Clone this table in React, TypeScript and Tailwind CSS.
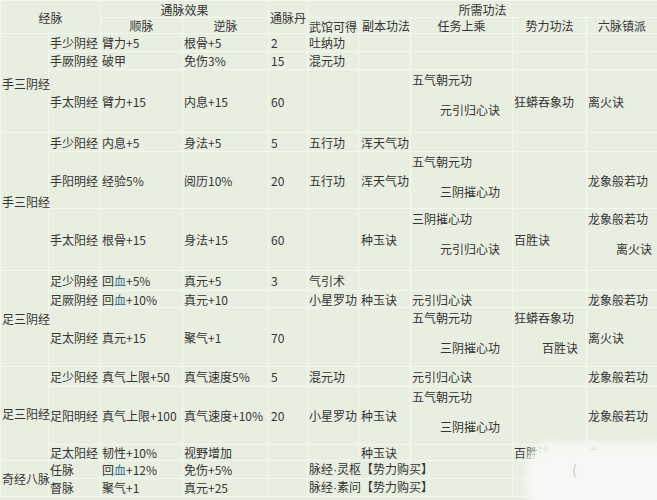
import React from "react";

type Val = string | [string, string] | undefined;

type Row = {
  g?: [string, number];
  n: string;
  s: string;
  v: string;
  d?: string;
  wg?: string;
  fb?: string;
  rw?: Val;
  sl?: Val;
  lm?: Val;
  wide?: [string, string];
  h: string;
};

const rows: Row[] = [
  { g: ["手三阴经", 3], n: "手少阴经", s: "臂力+5", v: "根骨+5", d: "2", wg: "吐纳功", h: "h-[18px]" },
  { n: "手厥阴经", s: "破甲", v: "免伤3%", d: "15", wg: "混元功", h: "h-[18px]" },
  { n: "手太阴经", s: "臂力+15", v: "内息+15", d: "60", rw: ["五气朝元功", "元引归心诀"], sl: "狂蟒吞象功", lm: "离火诀", h: "h-[63px]" },
  { g: ["手三阳经", 3], n: "手少阳经", s: "内息+5", v: "身法+5", d: "5", wg: "五行功", fb: "浑天气功", h: "h-[19px]" },
  { n: "手阳明经", s: "经验5%", v: "阅历10%", d: "20", wg: "五行功", fb: "浑天气功", rw: ["五气朝元功", "三阴摧心功"], lm: "龙象般若功", h: "h-[57px]" },
  { n: "手太阳经", s: "根骨+15", v: "身法+15", d: "60", fb: "种玉诀", rw: ["三阴摧心功", "元引归心诀"], sl: "百胜诀", lm: ["龙象般若功", "离火诀"], h: "h-[62px]" },
  { g: ["足三阴经", 3], n: "足少阴经", s: "回血+5%", v: "真元+5", d: "3", wg: "气引术", h: "h-[20px]" },
  { n: "足厥阴经", s: "回血+10%", v: "真元+10", wg: "小星罗功", fb: "种玉诀", rw: "元引归心诀", lm: "龙象般若功", h: "h-[17px]" },
  { n: "足太阴经", s: "真元+15", v: "聚气+1", d: "70", rw: ["五气朝元功", "三阴摧心功"], sl: ["狂蟒吞象功", "百胜诀"], lm: "离火诀", h: "h-[59px]" },
  { g: ["足三阳经", 3], n: "足少阳经", s: "真气上限+50", v: "真气速度5%", d: "5", wg: "混元功", rw: "元引归心诀", lm: "龙象般若功", h: "h-[20px]" },
  { n: "足阳明经", s: "真气上限+100", v: "真气速度+10%", d: "20", wg: "小星罗功", fb: "种玉诀", rw: ["五气朝元功", "三阴摧心功"], lm: "龙象般若功", h: "h-[58px]" },
  { n: "足太阳经", s: "韧性+10%", v: "视野增加", fb: "种玉诀", sl: "百胜诀", lm: "白", h: "h-[16px]" },
  { g: ["奇经八脉", 2], n: "任脉", s: "回血+12%", v: "免伤+5%", wide: ["脉经", "灵枢"], h: "h-[16px]" },
  { n: "督脉", s: "聚气+1", v: "真元+25", wide: ["脉经", "素问"], h: "h-[17px]" },
];

const td = "border border-[#f4f7f0] px-[1px] py-0 whitespace-nowrap";

function Shun({ text }: { text: string }) {
  if (!text.startsWith("回血")) return <>{text}</>;
  return (
    <>
      回<span className="text-[#3a6d8a]">血</span>
      {text.slice(2)}
    </>
  );
}

function Cell({ v }: { v: Val }) {
  if (Array.isArray(v)) {
    return (
      <td className={`${td} align-top`}>
        <div className="pt-[2px]">{v[0]}</div>
        <div className="mt-[15px] pl-[28px]">{v[1]}</div>
      </td>
    );
  }
  return <td className={`${td} align-middle`}>{v ?? ""}</td>;
}

export default function App() {
  return (
    <div
      className="relative w-[657px] h-[500px] overflow-hidden bg-[#e8efe1] text-[#353535] text-[12px] leading-[15px]"
      style={{ fontFamily: '"Noto Sans CJK SC", "Noto Sans", sans-serif' }}
    >
      <table className="table-fixed border-collapse w-[657px]">
        <colgroup>
          <col className="w-[48px]" />
          <col className="w-[52px]" />
          <col className="w-[82px]" />
          <col className="w-[86px]" />
          <col className="w-[39px]" />
          <col className="w-[51px]" />
          <col className="w-[52px]" />
          <col className="w-[102px]" />
          <col className="w-[74px]" />
          <col className="w-[71px]" />
        </colgroup>
        <thead>
          <tr className="h-[17px]">
            <th rowSpan={2} colSpan={2} className={`${td} font-normal text-center`}>
              经脉
            </th>
            <th colSpan={2} className={`${td} font-normal text-center`}>
              通脉效果
            </th>
            <th rowSpan={2} className={`${td} font-normal text-left`}>
              通脉丹
            </th>
            <th colSpan={5} className={`${td} font-normal text-center`}>
              所需功法
            </th>
          </tr>
          <tr className="h-[15px]">
            <th className={`${td} font-normal text-center`}>顺脉</th>
            <th className={`${td} font-normal text-center`}>逆脉</th>
            <th className={`${td} font-normal text-left`}>
              <span className="relative top-[1px]">武馆可得</span>
            </th>
            <th className={`${td} font-normal text-left pl-[3px]`}>副本功法</th>
            <th className={`${td} font-normal text-center`}>任务上乘</th>
            <th className={`${td} font-normal text-center`}>势力功法</th>
            <th className={`${td} font-normal text-center`}>六脉镇派</th>
          </tr>
        </thead>
        <tbody>
          {rows.map((r) => (
            <tr key={r.n} className={r.h}>
              {r.g && (
                <td rowSpan={r.g[1]} className={`${td} px-0 align-middle`}>
                  {r.g[0]}
                </td>
              )}
              <td className={`${td} align-middle`}>{r.n}</td>
              <td className={`${td} align-middle`}>
                <Shun text={r.s} />
              </td>
              <td className={`${td} align-middle`}>{r.v}</td>
              <td className={`${td} align-middle pl-[2px]`}>{r.d ?? ""}</td>
              {r.wide ? (
                <td colSpan={2} className={`${td} align-middle`}>
                  {r.wide[0]}
                  <span style={{ fontFamily: '"Liberation Sans", sans-serif' }}>·</span>
                  {r.wide[1]}【势力购买】
                </td>
              ) : (
                <>
                  <Cell v={r.wg} />
                  <td className={`${td} align-middle pl-[2px]`}>{r.fb ?? ""}</td>
                </>
              )}
              <Cell v={r.rw} />
              <Cell v={r.sl} />
              <Cell v={r.lm} />
            </tr>
          ))}
        </tbody>
      </table>

      {/* watermark smudge over the bottom-right corner */}
      <div className="absolute left-[526px] top-[443px] w-[150px] h-[70px] rounded-[24px] bg-[#f7f8f5] blur-[5px]" />
      <div className="absolute left-[572px] top-[462px] text-[14px] text-[#c9cbc6]">(</div>
    </div>
  );
}
